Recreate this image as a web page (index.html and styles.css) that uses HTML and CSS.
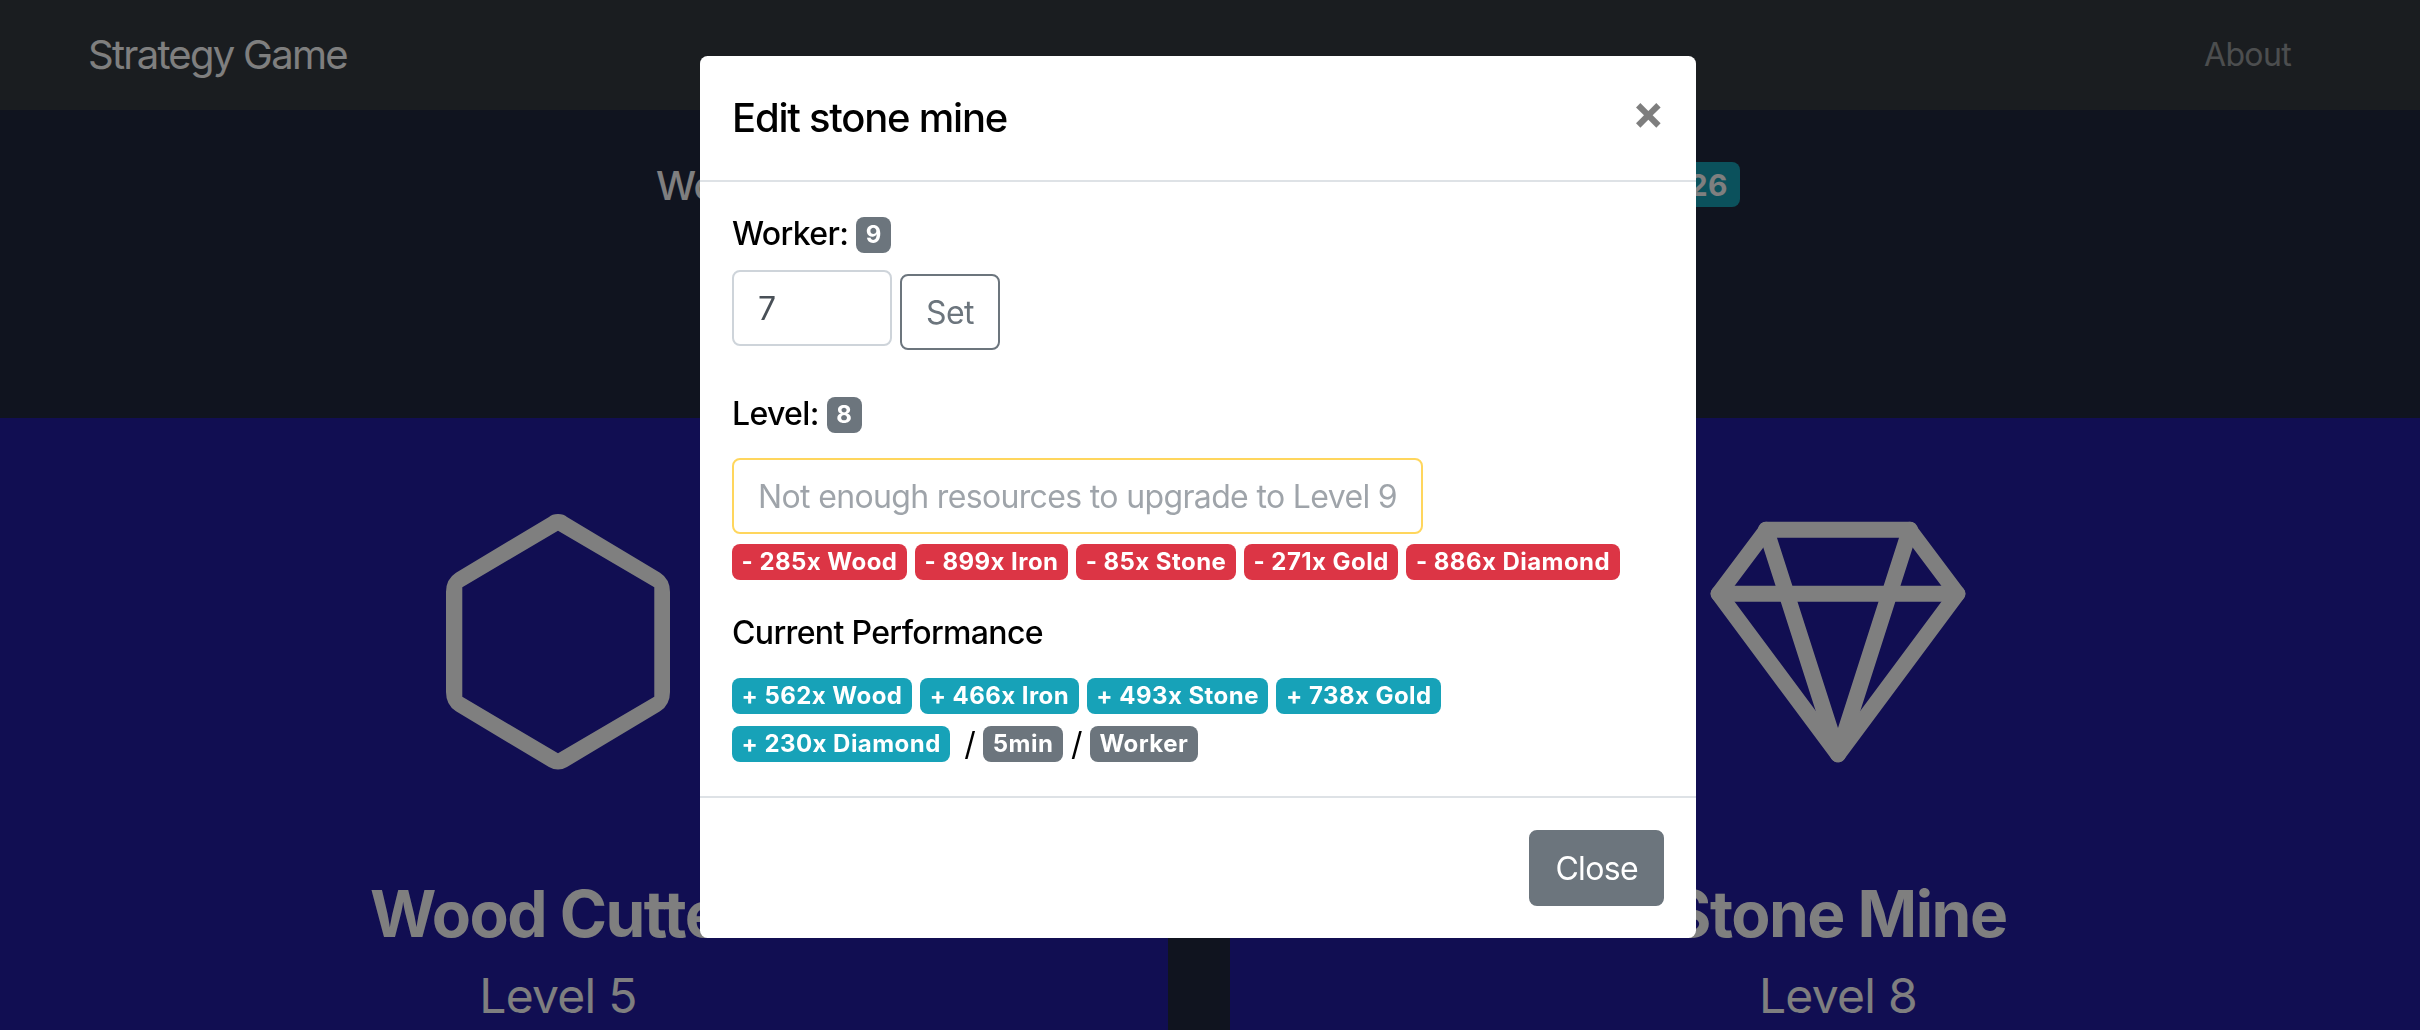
FILE: index.html
```html
<!DOCTYPE html>
<html lang="en">
<head>
<meta charset="utf-8">
<title>Strategy Game</title>
<link rel="stylesheet" href="styles.css">
</head>
<body>
<nav class="navbar">
  <a class="brand">Strategy Game</a>
  <a class="nav-link">About</a>
</nav>
<section class="hero">
  <div class="stat">
    <span class="stat-label">Worker</span>
    <span class="badge badge-info badge-large">26</span>
  </div>
</section>
<main class="cards">
  <article class="card">
    <svg class="card-icon" viewBox="0 0 256 256" aria-hidden="true">
      <path class="icon-fill" fill-rule="evenodd" d="M128 0Q134 0 137 3L230 58.700Q240 65 240 78V178Q240 191 230 197.300L137 253Q128 258 119 253L26 197.300Q16 191 16 178V78Q16 65 26 58.700L119 3Q122 0 128 0ZM128 16.700L32.300 73.300V182.700L128 239.300L224.300 182.700V73.300Z"/>
    </svg>
    <h2 class="card-title">Wood Cutter</h2>
    <h4 class="card-level">Level 5</h4>
  </article>
  <article class="card">
    <svg class="card-icon" viewBox="0 0 256 256" aria-hidden="true">
      <g class="icon-stroke">
        <path d="M56.700 15.700H199.300L247.300 79.700L128 240.300L8.700 79.700Z"/>
        <path d="M8.700 79.700H247.300"/>
        <path d="M56 15.700L128 240.300L200 15.700"/>
      </g>
    </svg>
    <h2 class="card-title">Stone Mine</h2>
    <h4 class="card-level">Level 8</h4>
  </article>
</main>

<div class="backdrop"></div>
<div class="modal-layer">
  <div class="modal">
    <header class="modal-header">
      <h5 class="modal-title">Edit stone mine</h5>
      <span class="modal-close">×</span>
    </header>
    <div class="modal-body">
      <div class="field-label">Worker: <span class="badge badge-secondary">9</span></div>
      <div class="worker-form">
        <input class="number-input" type="text" value="7">
        <button class="btn btn-outline" type="button">Set</button>
      </div>
      <div class="field-label level-label">Level: <span class="badge badge-secondary">8</span></div>
      <button class="btn btn-disabled" type="button">Not enough resources to upgrade to Level 9</button>
      <div class="badge-row cost-row">
        <span class="badge badge-danger">- 285x Wood</span>
        <span class="badge badge-danger">- 899x Iron</span>
        <span class="badge badge-danger">- 85x Stone</span>
        <span class="badge badge-danger">- 271x Gold</span>
        <span class="badge badge-danger">- 886x Diamond</span>
      </div>
      <div class="section-title">Current Performance</div>
      <div class="badge-row">
        <span class="badge badge-info">+ 562x Wood</span>
        <span class="badge badge-info">+ 466x Iron</span>
        <span class="badge badge-info">+ 493x Stone</span>
        <span class="badge badge-info">+ 738x Gold</span>
      </div>
      <div class="badge-row">
        <span class="badge badge-info">+ 230x Diamond</span>
        <span class="slash slash-first">/</span>
        <span class="badge badge-secondary">5min</span>
        <span class="slash">/</span>
        <span class="badge badge-secondary">Worker</span>
      </div>
    </div>
    <footer class="modal-footer">
      <button class="btn btn-secondary" type="button">Close</button>
    </footer>
  </div>
</div>
</body>
</html>
```
FILE: styles.css
```css
* { box-sizing: border-box; }
html, body { height: 100%; }
body {
  margin: 0;
  overflow: hidden;
  display: flex;
  flex-direction: column;
  background: #20283e;
  color: #fff;
  font-family: Inter, "Liberation Sans", sans-serif;
  font-size: 32px;
  line-height: 1.5;
  letter-spacing: -0.65px;
}

.navbar {
  height: 110px;
  flex: none;
  padding: 0 129px 0 88px;
  display: flex;
  align-items: center;
  justify-content: space-between;
  background: #343a40;
}
.brand { font-size: 40px; letter-spacing: -1.72px; color: #fff; }
.nav-link { color: rgba(255, 255, 255, 0.5); }

.hero {
  height: 308px;
  flex: none;
  padding: 52px 24px 0 0;
  display: flex;
  justify-content: center;
  align-items: flex-start;
}
.stat {
  width: 1084px;
  display: flex;
  justify-content: space-between;
  align-items: flex-start;
}
.stat-label { font-size: 40px; font-weight: 500; line-height: 48px; }

.cards {
  flex: 1;
  min-height: 0;
  width: 2498px;
  margin-left: -52px;
  display: grid;
  grid-template-columns: 1220px 1216px;
  column-gap: 62px;
}
.card {
  padding-top: 96px;
  overflow: hidden;
  display: flex;
  flex-direction: column;
  align-items: center;
  background: #221ca4;
}
.card-icon { width: 256px; height: 256px; flex: none; display: block; }
.icon-fill { fill: #fff; }
.icon-stroke { fill: none; stroke: #fff; stroke-width: 16; stroke-linejoin: round; stroke-linecap: round; }
.card-title { margin: 105px 0 0; font-size: 64px; font-weight: 700; line-height: 77px; letter-spacing: -1.5px; white-space: nowrap; }
.card-level { margin: 15px 0 0; font-size: 48px; font-weight: 400; line-height: 58px; letter-spacing: -0.7px; white-space: nowrap; }

.backdrop {
  position: fixed;
  inset: 0;
  background: rgba(0, 0, 0, 0.5);
}
.modal-layer {
  position: fixed;
  inset: 0;
  padding: 54px 24px 0 0;
  display: flex;
  justify-content: center;
  align-items: flex-start;
}
.modal {
  width: 1000px;
  color: #000;
  background: #fff;
  background-clip: padding-box;
  border: 2px solid transparent;
  border-radius: 9.6px;
}
.modal-header {
  height: 126px;
  padding: 32px;
  display: flex;
  justify-content: space-between;
  align-items: flex-start;
  border-bottom: 2px solid #dee2e6;
}
.modal-title { margin: 0; font-size: 40px; font-weight: 500; line-height: 60px; letter-spacing: -1.23px; }
.modal-close {
  font-size: 48px;
  font-weight: 700;
  line-height: 48px;
  color: #000;
  opacity: 0.5;
}
.modal-body { padding: 28px 32px 28px; }
.field-label { font-weight: 500; line-height: 48px; }
.worker-form { margin-top: 12px; display: flex; align-items: flex-start; gap: 8px; }
.number-input {
  width: 160px;
  height: 76px;
  padding: 12px 24px;
  border: 2px solid #ced4da;
  border-radius: 8px;
  background: #fff;
  color: #495057;
  font: inherit;
  letter-spacing: inherit;
}
.btn {
  height: 76px;
  padding: 2px 24px 0;
  border: 2px solid transparent;
  border-radius: 8px;
  background: transparent;
  font: inherit;
  letter-spacing: inherit;
  display: block;
}
.btn-outline { margin-top: 4px; border-color: #6c757d; color: #6c757d; }
.btn-disabled { border-color: #ffc107; color: #6c757d; opacity: 0.65; }
.btn-secondary { background: #6c757d; border-color: #6c757d; color: #fff; }
.level-label { margin-top: 40px; margin-bottom: 20px; }

.badge {
  display: inline-block;
  padding: 6px 9.6px;
  border-radius: 8px;
  font-size: 24px;
  font-weight: 700;
  line-height: 1;
  letter-spacing: 0.45px;
  color: #fff;
  white-space: nowrap;
  vertical-align: 2px;
}
.badge-secondary { background: #6c757d; }
.badge-danger { background: #dc3545; }
.badge-info { background: #17a2b8; }
.badge-large { padding: 7.5px 12px; font-size: 30px; }

.badge-row { height: 48px; display: flex; align-items: center; gap: 8px; }
.cost-row { margin-top: 4px; }
.section-title { margin-top: 23px; margin-bottom: 15px; font-weight: 500; line-height: 48px; }
.slash { margin: 0; }
.slash-first { margin-left: 6px; }

.modal-footer {
  padding: 32px;
  display: flex;
  justify-content: flex-end;
  border-top: 2px solid #dee2e6;
}
```
